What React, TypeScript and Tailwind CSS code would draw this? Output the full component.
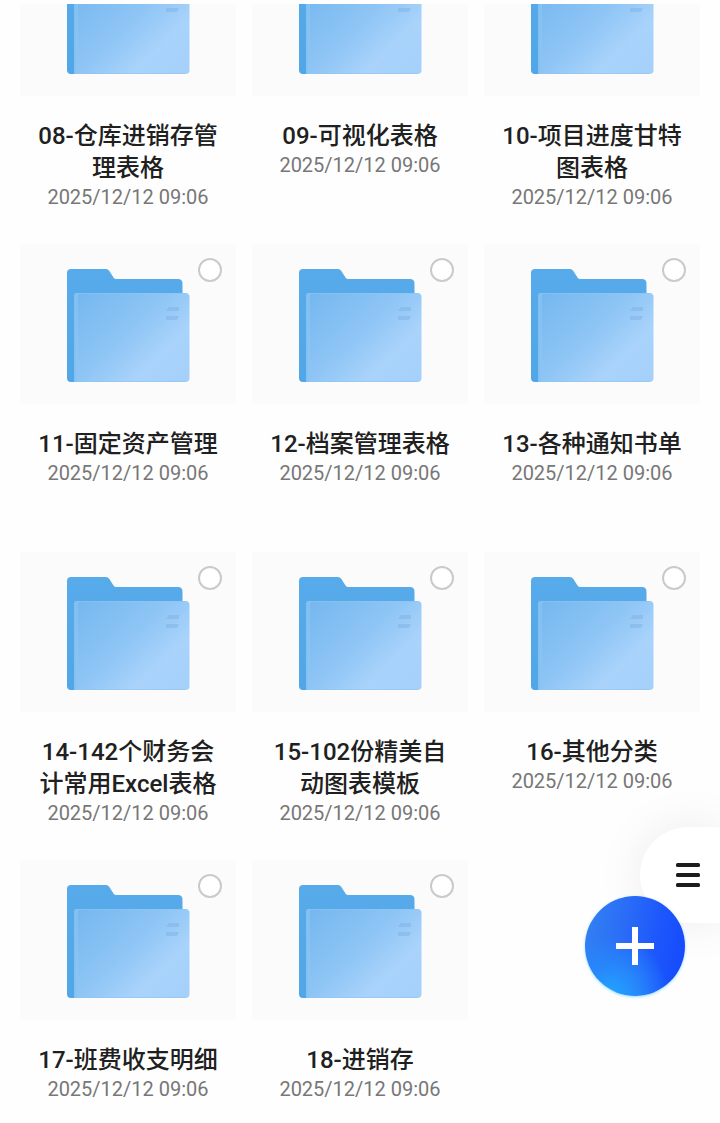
import { useState } from "react";

interface Folder {
  id: string;
  name: string;
  date: string;
}

const DATE = "2025/12/12 09:06";

const folders: Folder[] = [
  { id: "08", name: "08-仓库进销存管理表格", date: DATE },
  { id: "09", name: "09-可视化表格", date: DATE },
  { id: "10", name: "10-项目进度甘特图表格", date: DATE },
  { id: "11", name: "11-固定资产管理", date: DATE },
  { id: "12", name: "12-档案管理表格", date: DATE },
  { id: "13", name: "13-各种通知书单", date: DATE },
  { id: "14", name: "14-142个财务会计常用Excel表格", date: DATE },
  { id: "15", name: "15-102份精美自动图表模板", date: DATE },
  { id: "16", name: "16-其他分类", date: DATE },
  { id: "17", name: "17-班费收支明细", date: DATE },
  { id: "18", name: "18-进销存", date: DATE },
];

// Gradients are shared by every folder icon, so define them once
function FolderGradients() {
  return (
    <svg className="absolute size-0" aria-hidden="true">
      <defs>
        <linearGradient id="folder-back" x1="0" y1="0" x2="0" y2="1">
          <stop offset="0" stopColor="#58abea" />
          <stop offset="1" stopColor="#50a6e6" />
        </linearGradient>
        <linearGradient id="folder-front" x1="0" y1="0.1" x2="1" y2="0.9">
          <stop offset="0" stopColor="#76b8ef" />
          <stop offset="0.45" stopColor="#8ec5f5" />
          <stop offset="0.75" stopColor="#a9d3fb" />
          <stop offset="1" stopColor="#a4d0fa" />
        </linearGradient>
        <linearGradient id="folder-edge" x1="0" y1="0" x2="1" y2="0">
          <stop offset="0" stopColor="#7fbff1" />
          <stop offset="1" stopColor="#8ec8f5" stopOpacity="0.5" />
        </linearGradient>
      </defs>
    </svg>
  );
}

function FolderIcon() {
  return (
    <svg width="124" height="116" viewBox="0 0 124 116" aria-hidden="true">
      <path
        d="M5 3H40Q42 3 43.200 4.800L47.500 11.500Q48.500 13 50.500 13H112Q116.500 13 116.500 17.500V60H20V116H5Q1 116 1 112V7Q1 3 5 3Z"
        fill="url(#folder-back)"
      />
      <path
        d="M11 27H119.500Q123.500 27 123.500 31V112Q123.500 116 119.500 116H8V30Q8 27 11 27Z"
        fill="url(#folder-front)"
      />
      <path d="M11 27H12V116H8V30Q8 27 11 27Z" fill="url(#folder-edge)" />
      <path
        d="M11 27.500H119.500M10 115.500H119.500"
        stroke="#8fc4f0"
        strokeOpacity="0.6"
        fill="none"
      />
      <path
        d="M103 41H113V45H100ZM100 50H113L111 54H100Z"
        fill="#7fb2e2"
        fillOpacity="0.5"
      />
    </svg>
  );
}

interface FolderCardProps {
  folder: Folder;
  checked: boolean;
  onToggle: () => void;
}

function FolderCard({ folder, checked, onToggle }: FolderCardProps) {
  return (
    <li className="min-h-77 text-center">
      <div className="relative flex h-40 items-center justify-center bg-[#fbfbfb]">
        <FolderIcon />
        <input
          type="checkbox"
          id={`folder-${folder.id}`}
          checked={checked}
          onChange={onToggle}
          className="absolute top-3.5 right-3.5 size-6 appearance-none rounded-full border-2 border-[#cacaca] bg-white checked:border-blue-600 checked:bg-blue-600"
        />
      </div>
      <label
        htmlFor={`folder-${folder.id}`}
        className="mt-6 block px-4 text-2xl font-medium text-[#202020]"
      >
        {folder.name}
      </label>
      <p className="text-xl leading-[26px] text-[#777777]">{folder.date}</p>
    </li>
  );
}

export default function App() {
  const [selected, setSelected] = useState<string[]>([]);

  const toggle = (id: string) => {
    setSelected((prev) =>
      prev.includes(id) ? prev.filter((s) => s !== id) : [...prev, id]
    );
  };

  return (
    <div className="relative h-screen overflow-hidden bg-[#fefefe] pt-1 font-[Roboto,'Noto_Sans_CJK_SC',sans-serif]">
      <FolderGradients />

      <main className="overflow-hidden px-5">
        <ul className="-mt-17 grid grid-cols-3 gap-x-4">
          {folders.map((folder) => (
            <FolderCard
              key={folder.id}
              folder={folder}
              checked={selected.includes(folder.id)}
              onToggle={() => toggle(folder.id)}
            />
          ))}
        </ul>
      </main>

      {/* Floating actions */}
      <div className="absolute right-0 bottom-[127px] flex flex-col items-end">
        <button
          type="button"
          aria-label="菜单"
          className="flex h-24 w-20 items-center justify-end rounded-l-full bg-white pr-5 shadow-[0_0_48px_rgba(0,0,0,0.08)]"
        >
          <svg width="24" height="26" viewBox="0 0 24 26" aria-hidden="true">
            <g fill="#1c1c1e">
              <rect x="0" y="1" width="24" height="4" rx="1.500" />
              <rect x="0" y="11" width="24" height="4" rx="1.500" />
              <rect x="0" y="21" width="24" height="4" rx="1.500" />
            </g>
          </svg>
        </button>
        <button
          type="button"
          aria-label="新建"
          className="relative -mt-[27px] mr-[35px] flex size-25 items-center justify-center rounded-full bg-[radial-gradient(circle_at_25%_100%,#1fa8ff_0%,#2788fb_22%,transparent_48%),linear-gradient(100deg,#3384f2_0%,#2b6ef6_35%,#1c56fc_70%,#1448fb_100%)] shadow-[0_1px_3px_rgba(80,200,255,0.6)]"
        >
          <svg width="38" height="38" viewBox="0 0 38 38" aria-hidden="true">
            <path d="M19 0V38M0 19H38" stroke="#ffffff" strokeWidth="6" />
          </svg>
        </button>
      </div>
    </div>
  );
}
